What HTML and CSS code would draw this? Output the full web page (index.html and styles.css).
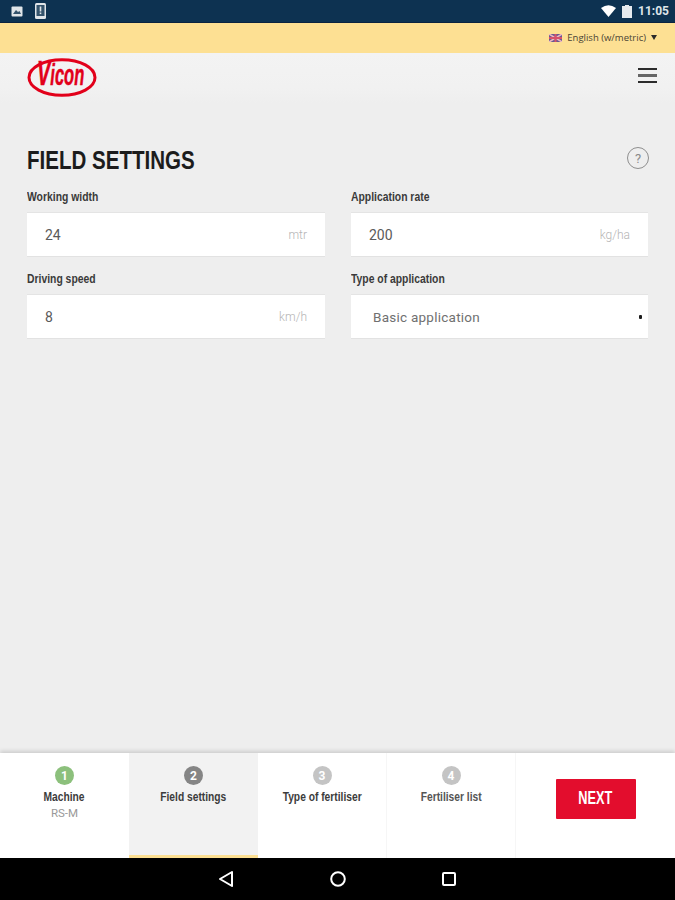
FILE: index.html
```html
<!DOCTYPE html>
<html>
  <head>
    <title>Field settings</title>
    <link rel="stylesheet" href="styles.css">
  </head>
  <body>
    <div class="statusBar">
      <div class="statusLeft">
        <svg width="12" height="11" viewBox="0 0 12 11"><rect x="0.5" y="0.5" width="11" height="10" rx="1" fill="#dfe5e9"/><path d="M2 8 L5 4 L7 6 L8.5 5 L10 8 Z" fill="#33536c"/></svg>
        <svg width="11" height="16" viewBox="0 0 11 16"><rect x="0" y="0" width="11" height="16" rx="1.5" fill="#dfe5e9"/><rect x="1.5" y="2" width="8" height="11" fill="#33536c"/><rect x="4.7" y="3.5" width="1.6" height="5" fill="#dfe5e9"/><rect x="4.7" y="9.5" width="1.6" height="1.6" fill="#dfe5e9"/></svg>
      </div>
      <div class="statusRight">
        <svg width="15" height="12" viewBox="0 0 15 12"><path d="M0 3 Q7.5 -2.5 15 3 L7.5 12 Z" fill="#fff"/></svg>
        <svg width="10" height="13" viewBox="0 0 10 13"><path d="M3 0 H7 V1 H10 V13 H0 V1 H3 Z" fill="#e6eaee"/></svg>
        <span class="clock">11:05</span>
      </div>
    </div>

    <div class="langBar">
      <svg class="flag" width="13" height="8" viewBox="0 0 13 8">
        <rect width="13" height="8" rx="1" fill="#6a5a92"/>
        <path d="M0 0 L13 8 M13 0 L0 8" stroke="#eeb8c0" stroke-width="1.5"/>
        <path d="M6.5 0 V8 M0 4 H13" stroke="#d8506a" stroke-width="2"/>
      </svg>
      <span class="langText">English (w/metric)</span>
      <span class="langArrow"></span>
    </div>

    <div class="header">
      <svg class="logo" width="71" height="40" viewBox="0 0 71 40">
        <ellipse cx="35" cy="20.5" rx="33" ry="17.8" fill="none" stroke="#e2001a" stroke-width="3"/>
        <text class="logoText" transform="translate(10 27.5) scale(0.57 1)"><tspan class="logoV">V</tspan>icon</text>
      </svg>
      <div class="burger"><span></span><span class="mid"></span><span></span></div>
    </div>

    <div class="main">
      <div class="titleRow">
        <h1 class="title">FIELD SETTINGS</h1>
        <span class="help">?</span>
      </div>
      <div class="fields">
        <div class="field">
          <label>Working width</label>
          <div class="box"><span class="value">24</span><span class="unit">mtr</span></div>
        </div>
        <div class="field">
          <label>Application rate</label>
          <div class="box"><span class="value">200</span><span class="unit">kg/ha</span></div>
        </div>
        <div class="field">
          <label>Driving speed</label>
          <div class="box"><span class="value">8</span><span class="unit">km/h</span></div>
        </div>
        <div class="field">
          <label>Type of application</label>
          <div class="box selectBox"><span class="selectValue">Basic application</span><span class="selectDot"></span></div>
        </div>
      </div>
    </div>

    <div class="footer">
      <div class="step first">
        <span class="num done">1</span>
        <span class="stepName">Machine</span>
        <span class="stepSub">RS-M</span>
      </div>
      <div class="step active">
        <span class="num current">2</span>
        <span class="stepName">Field settings</span>
      </div>
      <div class="step">
        <span class="num">3</span>
        <span class="stepName">Type of fertiliser</span>
      </div>
      <div class="step">
        <span class="num">4</span>
        <span class="stepName dim">Fertiliser list</span>
      </div>
      <div class="nextArea"><button class="next"><span>NEXT</span></button></div>
    </div>

    <div class="navBar">
      <svg class="navBack" width="16" height="18" viewBox="0 0 16 18"><path d="M14 2 L2 9 L14 16 Z" fill="none" stroke="#fff" stroke-width="2" stroke-linejoin="round"/></svg>
      <svg width="16" height="16" viewBox="0 0 16 16"><circle cx="8" cy="8" r="6.8" fill="none" stroke="#fff" stroke-width="2"/></svg>
      <svg width="14" height="14" viewBox="0 0 14 14"><rect x="1" y="1" width="12" height="12" rx="1" fill="none" stroke="#fff" stroke-width="2"/></svg>
    </div>
  </body>
</html>
```

FILE: styles.css
```css
* { box-sizing: border-box; }
body { margin: 0; width: 675px; height: 900px; display: flex; flex-direction: column; background: #eee; font-family: "Roboto", "Liberation Sans", sans-serif; overflow: hidden; }

.statusBar { height: 23px; background: #0d3251; border-bottom: 1px solid #0a2340; display: flex; justify-content: space-between; align-items: center; padding: 0 6px 0 11px; }
.statusLeft { display: flex; align-items: center; gap: 12px; }
.statusRight { display: flex; align-items: center; gap: 6px; }
.clock { color: #dfe5e9; font-size: 12px; font-weight: 700; }

.langBar { height: 30px; background: #fde093; display: flex; justify-content: flex-end; align-items: center; padding: 0 18px 1px 0; }
.flag { margin-right: 5px; }
.langText { font-family: "Open Sans", sans-serif; font-size: 9.5px; color: #4a4433; }
.langArrow { margin-left: 5px; border-left: 3.5px solid transparent; border-right: 3.5px solid transparent; border-top: 5px solid #2a2a2a; }

.header { height: 50px; background: linear-gradient(#f3f3f3, #f1f1f1 70%, #eee); display: flex; justify-content: space-between; align-items: center; padding: 0 18px 3px 27px; }
.logo { overflow: visible; }
.logoText { font-family: "Liberation Sans", sans-serif; font-weight: 700; font-style: italic; font-size: 29px; fill: #e2001a; stroke: #e2001a; stroke-width: 0.5px; }
.logoV { font-size: 35px; }
.burger { display: flex; flex-direction: column; gap: 4px; margin-top: -2px; }
.burger span { display: block; width: 19px; height: 2.5px; background: #2c2c2c; }
.burger .mid { background: #666; }

.main { flex: 1; padding: 0 27px; }
.titleRow { display: flex; justify-content: space-between; align-items: center; padding-top: 32px; height: 82px; }
.title { margin: 0; font-family: "Liberation Sans", sans-serif; font-size: 26px; font-weight: 700; color: #1c1c1c; transform: scaleX(0.79); transform-origin: left center; white-space: nowrap; }
.help { width: 22px; height: 22px; margin: -4px -1px 0 0; border: 1.5px solid #8e8e8e; border-radius: 50%; color: #8a8a8a; font-size: 13px; display: flex; justify-content: center; align-items: center; }

.fields { display: grid; grid-template-columns: 298px 297px; column-gap: 26px; row-gap: 15px; margin-top: 5px; }
.field label { display: block; height: 21px; font-family: "Liberation Sans", sans-serif; font-size: 12.5px; font-weight: 700; color: #3a3a3a; line-height: 15px; margin-bottom: 1px; transform: scaleX(0.83); transform-origin: left center; white-space: nowrap; }
.box { height: 45px; background: #fff; border-top: 1px solid #e4e4e4; border-bottom: 1px solid #e2e2e2; display: flex; justify-content: space-between; align-items: center; padding: 0 18px; }
.value { font-size: 14px; color: #5a5a5a; }
.unit { font-size: 12px; font-weight: 300; color: #b4b4b4; }
.selectBox { padding: 0 6px 0 22px; }
.selectValue { font-size: 13.5px; color: #707070; letter-spacing: 0.25px; }
.selectDot { width: 3px; height: 4px; background: #1c1c1c; border-radius: 1px; }

.footer { height: 105px; background: #fff; display: flex; box-shadow: 0 -2px 4px rgba(0,0,0,0.14); position: relative; }
.step { width: 129px; display: flex; flex-direction: column; align-items: center; padding-top: 13px; border-right: 1px solid #f6f6f6; }
.step.first { border-right: 0; }
.step.active { background: #f2f2f2; border-bottom: 3px solid #fde093; border-right: 0; }
.num { width: 19px; height: 19px; border-radius: 50%; background: #c4c4c4; color: #fff; font-size: 12px; font-weight: 700; display: flex; justify-content: center; align-items: center; }
.num.done { background: #8cc07c; }
.num.current { background: #858585; }
.stepName { font-family: "Liberation Sans", sans-serif; font-size: 12.5px; font-weight: 700; color: #3c3c3c; margin-top: 4px; line-height: 16px; transform: scaleX(0.82); white-space: nowrap; }
.stepName.dim { color: #555; }
.stepSub { font-size: 11.5px; color: #999; margin-top: 1px; }
.nextArea { flex: 1; display: flex; justify-content: center; align-items: flex-start; padding-top: 26px; }
.next { width: 80px; height: 40px; padding: 0 0 2px; border: 0; border-radius: 1px; background: #e30d2d; color: #fff; font-family: "Liberation Sans", sans-serif; font-size: 17.5px; font-weight: 700; }
.next span { display: inline-block; transform: scaleX(0.73); }

.navBar { height: 42px; background: #000; display: flex; justify-content: center; align-items: center; gap: 96px; }
.navBack { margin-left: -1px; }
```
